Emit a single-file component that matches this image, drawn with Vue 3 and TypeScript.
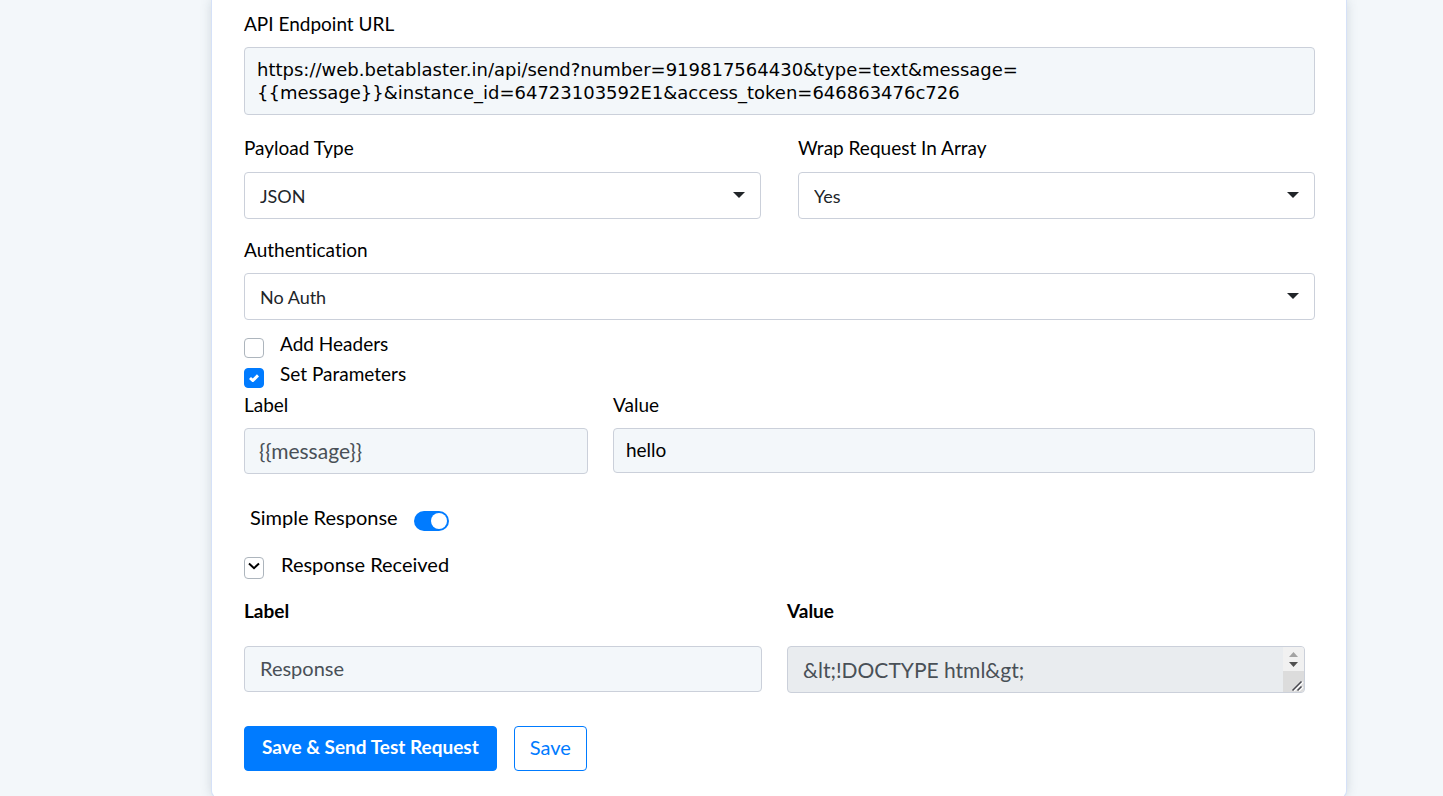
<script setup lang="ts">
import { ref } from 'vue'

const url = ref(
  'https://web.betablaster.in/api/send?number=919817564430&type=text&message={{message}}&instance_id=64723103592E1&access_token=646863476c726',
)
const payloadType = ref('JSON')
const wrapInArray = ref('Yes')
const auth = ref('No Auth')
const addHeaders = ref(false)
const setParameters = ref(true)
const paramLabel = ref('{{message}}')
const paramValue = ref('hello')
const simpleResponse = ref(true)
const responseLabel = ref('Response')
const responseValue = ref('&lt;!DOCTYPE html&gt;')
</script>

<template>
  <main class="page">
    <form class="card" @submit.prevent>
      <div class="field">
        <label for="url">API Endpoint URL</label>
        <textarea id="url" v-model="url" class="control url" rows="2" spellcheck="false"></textarea>
      </div>

      <div class="row halves">
        <div class="field">
          <label for="payload">Payload Type</label>
          <div class="select">
            <select id="payload" v-model="payloadType" class="control">
              <option>JSON</option>
            </select>
            <svg class="caret" viewBox="0 0 12 6" aria-hidden="true"><path d="M0 0h12L6 6z" /></svg>
          </div>
        </div>
        <div class="field">
          <label for="wrap">Wrap Request In Array</label>
          <div class="select">
            <select id="wrap" v-model="wrapInArray" class="control">
              <option>Yes</option>
            </select>
            <svg class="caret" viewBox="0 0 12 6" aria-hidden="true"><path d="M0 0h12L6 6z" /></svg>
          </div>
        </div>
      </div>

      <div class="field auth">
        <label for="auth">Authentication</label>
        <div class="select">
          <select id="auth" v-model="auth" class="control">
            <option>No Auth</option>
          </select>
          <svg class="caret" viewBox="0 0 12 6" aria-hidden="true"><path d="M0 0h12L6 6z" /></svg>
        </div>
      </div>

      <div class="checks">
        <div class="check">
          <input id="headers" v-model="addHeaders" type="checkbox" class="box" />
          <label for="headers">Add Headers</label>
        </div>
        <div class="check">
          <span class="tick-wrap">
            <input id="params" v-model="setParameters" type="checkbox" class="box" />
            <svg v-if="setParameters" class="tick" viewBox="0 0 10 8" aria-hidden="true">
              <path d="M1 4 3.800 6.500 9 1.400" />
            </svg>
          </span>
          <label for="params">Set Parameters</label>
        </div>
      </div>

      <div class="row params">
        <div class="field">
          <label for="plabel">Label</label>
          <input id="plabel" v-model="paramLabel" type="text" class="control shaded large" />
        </div>
        <div class="field">
          <label for="pvalue">Value</label>
          <input id="pvalue" v-model="paramValue" type="text" class="control shaded value" />
        </div>
      </div>

      <div class="simple">
        <label for="simple">Simple Response</label>
        <input id="simple" v-model="simpleResponse" type="checkbox" role="switch" class="toggle" />
      </div>

      <div class="received">
        <button type="button" class="expand" aria-labelledby="received-label">
          <svg viewBox="0 0 12 8" aria-hidden="true"><path d="M1 1.500 6 6.200l5-4.700" /></svg>
        </button>
        <span id="received-label">Response Received</span>
      </div>

      <div class="row response">
        <div class="field">
          <label for="rlabel">Label</label>
          <input id="rlabel" v-model="responseLabel" type="text" class="control shaded" />
        </div>
        <div class="field">
          <label for="rvalue">Value</label>
          <div class="output">
            <textarea id="rvalue" v-model="responseValue" class="control" rows="1" readonly></textarea>
            <svg class="scroll" viewBox="0 0 21 45" aria-hidden="true">
              <path fill="#f1f1f1" d="M0 0h21v24H0z" />
              <path fill="#dcdcdc" d="M0 24h21v21H0z" />
              <path fill="#a3a3a3" d="M6 10h9l-4.500-5z" />
              <path fill="#505050" d="M6 15h9l-4.500 5z" />
              <path stroke="#fff" stroke-width="1.500" d="m11 44 9-9M16 44l4-4" />
              <path stroke="#48484f" stroke-width="1.500" d="m9.500 43.500 9-9M14.500 43.500l4-4" />
            </svg>
          </div>
        </div>
      </div>

      <div class="actions">
        <button type="submit" class="btn primary">Save &amp; Send Test Request</button>
        <button type="button" class="btn outline">Save</button>
      </div>
    </form>
  </main>
</template>

<style>
body {
  margin: 0;
  background: #f3f7fa;
}
</style>

<style scoped>
.page,
.page * {
  box-sizing: border-box;
}
.page {
  min-height: 100vh;
  padding: 0 97px 0 212px;
  color: #000;
  font: 400 19px/30px Lato, "Open Sans", sans-serif;
  font-variant-ligatures: none;
}
.card {
  padding: 9px 31px 26px 32px;
  background: #fff;
  border-radius: 0 0 6px 6px;
  box-shadow: 0 0 0 1px #d5e1f8, 0 0 12px rgba(60, 80, 100, 0.22);
}
.field {
  display: flex;
  flex-direction: column;
  gap: 8px;
  min-width: 0;
}
.row {
  display: grid;
}
.halves {
  grid-template-columns: 1fr 1fr;
  column-gap: 37px;
  margin-top: 18px;
}
.halves .field {
  gap: 9px;
}
.auth {
  margin-top: 16px;
}
.control {
  display: block;
  width: 100%;
  margin: 0;
  border: 1px solid #cbd0da;
  border-radius: 4px;
  outline: none;
  font: 400 20px/28px Lato, "Open Sans", sans-serif;
  color: #495057;
  background: #fff;
}
.url {
  height: 68px;
  padding: 10px 12px;
  overflow: hidden;
  resize: none;
  color: #000;
  background: #f3f7fa;
  font: 400 18px/23px "DejaVu Sans", sans-serif;
}
.select {
  position: relative;
}
.select .control {
  appearance: none;
  height: 47px;
  padding: 0 40px 0 15px;
  color: #212529;
  font-size: 18px;
}
.caret {
  position: absolute;
  top: 20px;
  right: 16px;
  width: 12px;
  height: 6px;
  fill: #212529;
  pointer-events: none;
}
.checks {
  margin-top: 9px;
}
.check {
  display: flex;
  align-items: center;
  gap: 16px;
}
.box {
  display: block;
  appearance: none;
  width: 20px;
  height: 20px;
  margin: 8px 0 0;
  border: 1px solid #adb5bd;
  border-radius: 4px;
  background: #fff;
}
.box:checked {
  border-color: #007bff;
  background: #007bff;
}
.tick-wrap {
  position: relative;
}
.tick {
  position: absolute;
  top: 14px;
  left: 5px;
  width: 10px;
  height: 8px;
  fill: none;
  stroke: #fff;
  stroke-width: 3;
  pointer-events: none;
}
.params {
  grid-template-columns: 49fr 100fr;
  column-gap: 25px;
  margin-top: 1px;
}
.shaded {
  height: 46px;
  padding: 0 15px 3px;
  background: #f3f7fa;
}
.large {
  padding: 0 14px 2px;
  font-size: 21px;
}
.value {
  height: 45px;
  padding: 0 12px 2px;
  color: #000;
  font-size: 19px;
}
.simple {
  display: flex;
  align-items: center;
  gap: 16px;
  margin-top: 28px;
  padding-left: 6px;
  font-size: 20px;
}
.toggle {
  appearance: none;
  display: flex;
  align-items: center;
  justify-content: flex-start;
  width: 35px;
  height: 20px;
  margin: 8px 0 0;
  padding: 0 2px;
  border-radius: 10px;
  background: #adb5bd;
}
.toggle:checked {
  justify-content: flex-end;
  background: #007bff;
}
.toggle::before {
  content: "";
  width: 16px;
  height: 16px;
  border-radius: 50%;
  background: #fff;
}
.received {
  display: flex;
  align-items: center;
  gap: 17px;
  margin-top: 17px;
  font-size: 20px;
}
.expand {
  display: flex;
  align-items: flex-start;
  justify-content: center;
  width: 20px;
  height: 22px;
  margin: 8px 0 0;
  padding: 4px 0 0;
  border: 1px solid #adb5bd;
  border-radius: 4px;
  background: #fff;
}
.expand svg {
  flex: none;
  width: 12px;
  height: 8px;
  fill: none;
  stroke: #000;
  stroke-width: 2;
}
.response {
  grid-template-columns: 1fr 1fr;
  column-gap: 25px;
  margin-top: 17px;
  padding-right: 10px;
}
.response .field {
  gap: 20px;
}
.response label {
  font-weight: 700;
}
.output {
  position: relative;
}
.output .control {
  height: 47px;
  padding: 9px 36px 7px 15px;
  overflow: hidden;
  resize: none;
  font-size: 21px;
  background: #e9ecef;
}
.scroll {
  position: absolute;
  top: 1px;
  right: 1px;
  width: 21px;
  height: 45px;
  border-radius: 0 3px 3px 0;
  fill: none;
}
.actions {
  display: flex;
  flex-wrap: wrap;
  gap: 17px;
  margin-top: 33px;
}
.btn {
  height: 45px;
  padding: 0 15px 3px;
  border: 1px solid #007bff;
  border-radius: 4px;
  font: 400 20px/30px Lato, "Open Sans", sans-serif;
  cursor: pointer;
}
.primary {
  padding: 0 17px 3px;
  color: #fff;
  background: #007bff;
  font-size: 19px;
  font-weight: 700;
}
.outline {
  color: #007bff;
  background: #fff;
}
</style>
